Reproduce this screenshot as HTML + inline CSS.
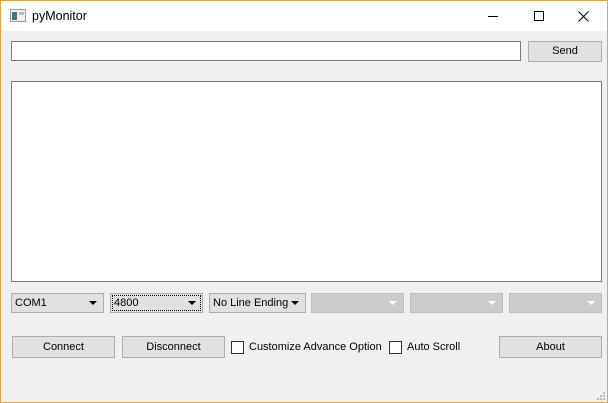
<!DOCTYPE html>
<html><head><meta charset="utf-8"><style>
*{box-sizing:border-box;margin:0;padding:0}
body{width:608px;height:403px;overflow:hidden;font-family:"Liberation Sans",sans-serif;font-size:11px;color:#000}
#win{position:absolute;left:0;top:0;width:608px;height:403px;border:1px solid #e8a33c;background:#f0f0f0}
#title{position:absolute;left:0;top:0;width:606px;height:30px;background:#fff}
.a{position:absolute}
.inp{background:#fff;border:1px solid #7a7a7a}
.btn{background:#e1e1e1;border:1px solid #adadad;text-align:center;line-height:19px}
.cb{background:#e1e1e1;border:1px solid #adadad;padding-left:3px;line-height:19px}
.cb.d{background:#cccccc;border-color:#bfbfbf}
.arr{position:absolute;right:6px;top:7px;width:0;height:0;border-left:4px solid transparent;border-right:4px solid transparent;border-top:4px solid #000}
.d .arr{border-top-color:#fff}
.chk{width:13px;height:13px;background:#fff;border:1px solid #333}
</style></head><body><div id="win">
<div id="title">
<svg class="a" style="left:9px;top:8px" width="16" height="14"><rect x="0.5" y="0.5" width="15" height="12" fill="#eee" stroke="#999"/><rect x="2" y="3" width="5" height="8" fill="#3c7a8a"/><rect x="9" y="3" width="5" height="3" fill="#bbb"/></svg>
<div class="a" style="left:31px;top:8px;font-size:12.5px">pyMonitor</div>
<div class="a" style="left:487px;top:15px;width:10px;height:1px;background:#000"></div>
<div class="a" style="left:533px;top:10px;width:10px;height:10px;border:1px solid #000"></div>
<svg class="a" style="left:577px;top:10px" width="11" height="11"><path d="M0.5 0.5L10.5 10.5M10.5 0.5L0.5 10.5" stroke="#000" stroke-width="1"/></svg>
</div>
<div class="a inp" style="left:10px;top:40px;width:510px;height:20px"></div>
<div class="a btn" style="left:527px;top:40px;width:74px;height:21px">Send</div>
<div class="a inp" style="left:10px;top:80px;width:591px;height:201px"></div>
<div class="a cb" style="left:10px;top:292px;width:93px;height:20px">COM1<div class="arr"></div></div>
<div class="a cb" style="left:109px;top:292px;width:93px;height:20px"><div class="a" style="left:1px;top:1px;right:1px;bottom:1px;border:1px dotted #000"></div>4800<div class="arr"></div></div>
<div class="a cb" style="left:208px;top:292px;width:97px;height:20px">No Line Ending<div class="arr"></div></div>
<div class="a cb d" style="left:310px;top:292px;width:93px;height:20px"><div class="arr"></div></div>
<div class="a cb d" style="left:409px;top:292px;width:93px;height:20px"><div class="arr"></div></div>
<div class="a cb d" style="left:508px;top:292px;width:93px;height:20px"><div class="arr"></div></div>
<div class="a btn" style="left:11px;top:335px;width:103px;height:22px;line-height:21px">Connect</div>
<div class="a btn" style="left:121px;top:335px;width:103px;height:22px;line-height:21px">Disconnect</div>
<div class="a chk" style="left:230px;top:340px"></div>
<div class="a" style="left:248px;top:340px">Customize Advance Option</div>
<div class="a chk" style="left:388px;top:340px"></div>
<div class="a" style="left:406px;top:340px">Auto Scroll</div>
<div class="a btn" style="left:498px;top:335px;width:103px;height:22px;line-height:21px">About</div>
<svg class="a" style="left:595px;top:390px" width="10" height="10" fill="#bbb"><rect x="7" y="1" width="2" height="2"/><rect x="4" y="4" width="2" height="2"/><rect x="7" y="4" width="2" height="2"/><rect x="1" y="7" width="2" height="2"/><rect x="4" y="7" width="2" height="2"/><rect x="7" y="7" width="2" height="2"/></svg>
</div></body></html>
